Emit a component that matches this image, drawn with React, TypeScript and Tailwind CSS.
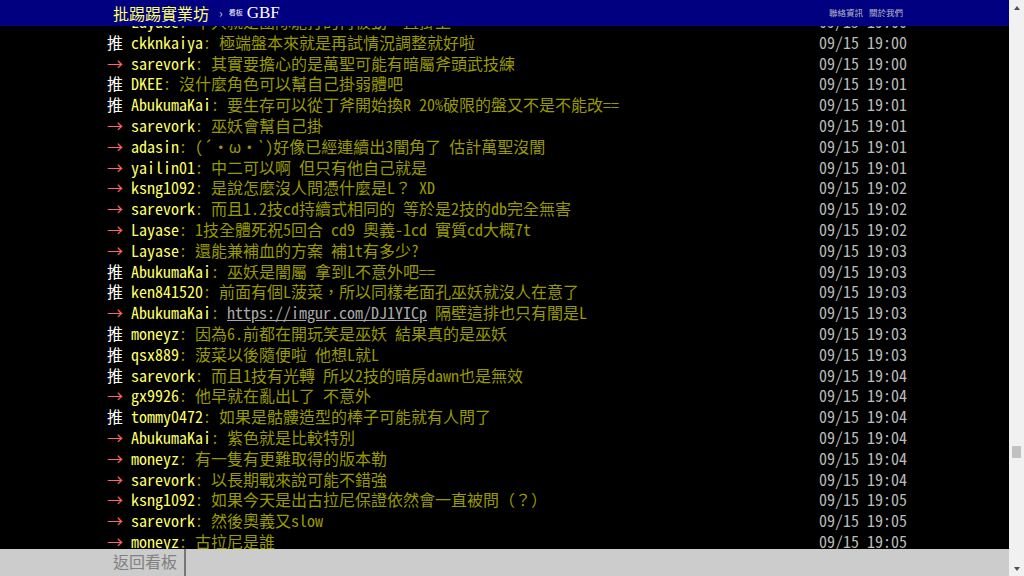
import React from "react";

type Push = { tag: "推" | "→"; user: string; content: React.ReactNode; time: string };

const pushes: Push[] = [
  { tag: "→", user: "Layase", content: "不只就是團隊能打的再被動一直掛上", time: "09/15 19:00" },
  { tag: "推", user: "ckknkaiya", content: "極端盤本來就是再試情況調整就好啦", time: "09/15 19:00" },
  { tag: "→", user: "sarevork", content: "其實要擔心的是萬聖可能有暗屬斧頭武技練", time: "09/15 19:00" },
  { tag: "推", user: "DKEE", content: "沒什麼角色可以幫自己掛弱體吧", time: "09/15 19:01" },
  { tag: "推", user: "AbukumaKai", content: "要生存可以從丁斧開始換R 20%破限的盤又不是不能改==", time: "09/15 19:01" },
  { tag: "→", user: "sarevork", content: "巫妖會幫自己掛", time: "09/15 19:01" },
  { tag: "→", user: "adasin", content: "(´・ω・`)好像已經連續出3闇角了 估計萬聖沒闇", time: "09/15 19:01" },
  { tag: "→", user: "yailin01", content: "中二可以啊 但只有他自己就是", time: "09/15 19:01" },
  { tag: "→", user: "ksng1092", content: "是說怎麼沒人問憑什麼是L？ XD", time: "09/15 19:02" },
  { tag: "→", user: "sarevork", content: "而且1.2技cd持續式相同的 等於是2技的db完全無害", time: "09/15 19:02" },
  { tag: "→", user: "Layase", content: "1技全體死祝5回合 cd9 奧義-1cd 實質cd大概7t", time: "09/15 19:02" },
  { tag: "→", user: "Layase", content: "還能兼補血的方案 補1t有多少?", time: "09/15 19:03" },
  { tag: "推", user: "AbukumaKai", content: "巫妖是闇屬 拿到L不意外吧==", time: "09/15 19:03" },
  { tag: "推", user: "ken841520", content: "前面有個L菠菜，所以同樣老面孔巫妖就沒人在意了", time: "09/15 19:03" },
  {
    tag: "→",
    user: "AbukumaKai",
    content: (
      <>
        <a href="#" className="text-[#aaa] underline">https://imgur.com/DJ1YICp</a> 隔壁這排也只有闇是L
      </>
    ),
    time: "09/15 19:03",
  },
  { tag: "推", user: "moneyz", content: "因為6.前都在開玩笑是巫妖 結果真的是巫妖", time: "09/15 19:03" },
  { tag: "推", user: "qsx889", content: "菠菜以後隨便啦 他想L就L", time: "09/15 19:03" },
  { tag: "推", user: "sarevork", content: "而且1技有光轉 所以2技的暗房dawn也是無效", time: "09/15 19:04" },
  { tag: "→", user: "gx9926", content: "他早就在亂出L了 不意外", time: "09/15 19:04" },
  { tag: "推", user: "tommy0472", content: "如果是骷髏造型的棒子可能就有人問了", time: "09/15 19:04" },
  { tag: "→", user: "AbukumaKai", content: "紫色就是比較特別", time: "09/15 19:04" },
  { tag: "→", user: "moneyz", content: "有一隻有更難取得的版本勒", time: "09/15 19:04" },
  { tag: "→", user: "sarevork", content: "以長期戰來說可能不錯強", time: "09/15 19:04" },
  { tag: "→", user: "ksng1092", content: "如果今天是出古拉尼保證依然會一直被問（？）", time: "09/15 19:05" },
  { tag: "→", user: "sarevork", content: "然後奧義又slow", time: "09/15 19:05" },
  { tag: "→", user: "moneyz", content: "古拉尼是誰", time: "09/15 19:05" },
];

const mono = '"Noto Sans Mono CJK TC", "Noto Sans CJK TC", "Liberation Mono", monospace';
const sans = '"Noto Sans CJK TC", "Liberation Serif", serif';

function PushRow({ p }: { p: Push }) {
  return (
    <div className="flex h-[20.8px] items-center whitespace-nowrap text-[16px] leading-[20.8px]">
      <span className={"inline-block w-[24px] " + (p.tag === "推" ? "text-white" : "text-[#f66]")}>{p.tag}</span>
      <span className="text-[#ff6]">{p.user}</span>
      <span className="flex-1 overflow-hidden text-[#990]">: {p.content}</span>
      <span className="text-[#bbb]">{p.time}</span>
    </div>
  );
}

export default function App() {
  return (
    <div className="flex h-[576px] w-full overflow-hidden bg-black" style={{ fontFamily: mono }}>
      <div className="relative flex-1 overflow-hidden">
        <div className="absolute left-0 right-0 top-0 z-10 h-[26px] bg-[#000080]">
          <div className="ml-[107px] flex h-full w-[800px] items-center justify-between pb-[1px] pl-[6px] pr-[4px]">
            <div className="flex items-center">
              <span className="text-[16px] text-[#ff6]" style={{ fontFamily: sans }}>批踢踢實業坊</span>
              <span className="ml-[10px] text-[12px] text-[#ccc]">›</span>
              <span className="ml-[6px] text-[7px] text-white" style={{ fontFamily: sans }}>看板</span>
              <span className="ml-[4px] text-[17px] text-white" style={{ fontFamily: '"Liberation Serif", serif' }}>GBF</span>
            </div>
            <div className="flex gap-[6px] text-[8.5px] text-[#bbc]" style={{ fontFamily: sans }}>
              <span>聯絡資訊</span>
              <span>關於我們</span>
            </div>
          </div>
        </div>

        <div className="ml-[107px] w-[800px] pt-[11px]">
          {pushes.map((p, i) => (
            <PushRow key={i} p={p} />
          ))}
        </div>

        <div className="absolute bottom-0 left-0 right-0 z-10 h-[27px] bg-[#ccc]">
          <div className="ml-[107px] flex h-full">
            <div
              className="flex items-center border-r-2 border-[#777] pb-[4px] pl-[6px] pr-[7px] text-[16px] text-[#808080]"
              style={{ fontFamily: sans }}
            >
              返回看板
            </div>
          </div>
        </div>
      </div>

      <div className="flex w-[15px] flex-col items-center bg-[#f1f1f1]">
        <div className="flex h-[15px] w-full items-center justify-center">
          <div className="h-0 w-0 border-x-[3px] border-b-[4px] border-x-transparent border-b-[#505050]" />
        </div>
        <div className="mt-[431px] h-[12px] w-[9px] bg-[#c1c1c1]" />
        <div className="flex-1" />
        <div className="flex h-[15px] w-full items-center justify-center">
          <div className="h-0 w-0 border-x-[3px] border-t-[4px] border-x-transparent border-t-[#505050]" />
        </div>
      </div>
    </div>
  );
}
